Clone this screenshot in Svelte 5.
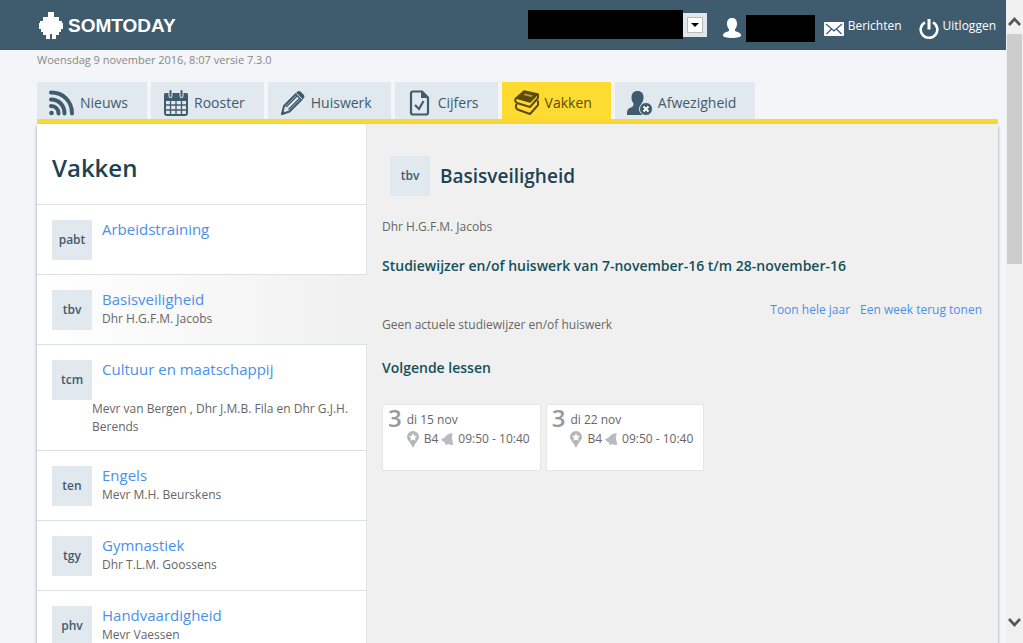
<script lang="ts">
  const tabs = ["Nieuws", "Rooster", "Huiswerk", "Cijfers", "Vakken", "Afwezigheid"];
  let activeTab = "Vakken";

  const subjects = [
    { code: "pabt", name: "Arbeidstraining", teacher: "" },
    { code: "tbv", name: "Basisveiligheid", teacher: "Dhr H.G.F.M. Jacobs" },
    {
      code: "tcm",
      name: "Cultuur en maatschappij",
      teacher: "Mevr van Bergen , Dhr J.M.B. Fila en Dhr G.J.H. Berends",
      wide: true
    },
    { code: "ten", name: "Engels", teacher: "Mevr M.H. Beurskens" },
    { code: "tgy", name: "Gymnastiek", teacher: "Dhr T.L.M. Goossens" },
    { code: "phv", name: "Handvaardigheid", teacher: "Mevr Vaessen" }
  ];
  let selected = "tbv";

  const lessons = [
    { hour: 3, day: "di 15 nov", room: "B4", time: "09:50 - 10:40" },
    { hour: 3, day: "di 22 nov", room: "B4", time: "09:50 - 10:40" }
  ];
</script>

<div class="window">
  <div class="page">
    <header>
      <a href="#home" class="logo">
        <svg width="24" height="28" viewBox="0 0 24 28" fill="#fff" aria-hidden="true">
          <path d="M9 0h6v5h5v4h3v2h1v6h-2v3h-2v3h-3v4h-4v-5h-2v5H7v-4H4v-3H2v-3H0v-6h1V9h3V5h5z" />
        </svg>
        <span>SOMTODAY</span>
      </a>

      <div class="school">
        <select aria-label="School"><option></option></select>
        <span class="select-arrow"></span>
        <span class="select-mask"></span>
      </div>

      <div class="user">
        <svg width="18" height="20" viewBox="0 0 18 20" fill="#fff" aria-hidden="true">
          <path d="M9 0c3 0 5 2 5 5.500c0 3-1 4.500-2 6v1.500c2 1 6 1.300 6 4.500c0 1.500-4 2.500-9 2.500s-9-1-9-2.500c0-3.200 4-3.500 6-4.500v-1.500c-1-1.500-2-3-2-6C4 2 6 0 9 0z" />
        </svg>
        <span class="user-name"></span>
      </div>

      <a href="#berichten" class="header-link">
        <svg width="20" height="14" viewBox="0 0 20 14" aria-hidden="true">
          <rect width="20" height="14" rx="1" fill="#fff" />
          <path d="M2 2l8 7l8-7M2.500 12l5-5M17.500 12l-5-5" fill="none" stroke="#3f5c6e" stroke-width="1.300" />
        </svg>
        <span>Berichten</span>
      </a>
      <a href="#uitloggen" class="header-link logout">
        <svg width="20" height="20" viewBox="0 0 20 20" fill="none" stroke="#fff" aria-hidden="true">
          <path d="M6 3.300a8.300 8.300 0 1 0 8 0" stroke-width="2.600" />
          <path d="M10 0v10.500" stroke-width="3" />
        </svg>
        <span>Uitloggen</span>
      </a>
    </header>

    <p class="version">Woensdag 9 november 2016, 8:07 versie 7.3.0</p>

    <nav>
      {#each tabs as tab}
        <a href="#{tab.toLowerCase()}" class="tab" class:active={tab === activeTab} on:click={() => (activeTab = tab)}>
          <svg width="26" height="26" viewBox="0 0 26 26" aria-hidden="true">
            {#if tab === "Nieuws"}
              <g fill="none" stroke="currentColor" stroke-width="4" stroke-linecap="round">
                <path d="M2 2.500C14 2.500 23 11 23 23.500M2 9.500c8 0 13.500 6 13.500 14M2 16c4.500 0 7.500 3 7.500 7.500" />
              </g>
              <circle cx="2.500" cy="23" r="2.300" fill="currentColor" />
            {:else if tab === "Rooster"}
              <path d="M3 3h20q2 0 2 2v6H1V5q0-2 2-2z" fill="currentColor" />
              <rect x="2" y="4" width="22" height="21" rx="2" fill="none" stroke="currentColor" stroke-width="2" />
              <path d="M2 15h22M2 20h22M7.500 10v15M13 10v15M18.500 10v15" stroke="currentColor" stroke-width="1.300" />
              <path d="M7.500 1v5M18.500 1v5" stroke="#e1e8ee" stroke-width="4" stroke-linecap="round" />
              <path d="M7.500 1v5M18.500 1v5" stroke="currentColor" stroke-width="2" stroke-linecap="round" />
            {:else if tab === "Huiswerk"}
              <path d="M2 24l2-8L16 4l5.500 5.500L9.500 21.500z" fill="none" stroke="currentColor" stroke-width="2" stroke-linejoin="round" />
              <path d="M6 17L17 6M8.500 19.500L19.500 8.500" stroke="currentColor" stroke-width="1.500" />
              <path d="M1 25l1.500-5l3.500 3.500zM16 3l1.500-1.500q1.500-1 3 0l3.500 3.500q1 1.500 0 3L22.500 9.500z" fill="currentColor" />
              <path d="M16.500 3.500l5.500 5.500" stroke="#e1e8ee" stroke-width="1" />
            {:else if tab === "Cijfers"}
              <path d="M15 1.500H6q-2 0-2 2v19q0 2 2 2h13q2 0 2-2V7.500z" fill="none" stroke="currentColor" stroke-width="2.200" stroke-linejoin="round" />
              <path d="M14 1l7 7h-7z" fill="currentColor" />
              <path d="M8 15l4 4L16.500 11" fill="none" stroke="currentColor" stroke-width="2.200" />
            {:else if tab === "Vakken"}
              <path d="M10 1l14 3l-8 8L2 8z" fill="currentColor" stroke="currentColor" stroke-width="1.500" stroke-linejoin="round" />
              <path d="M11 3.500l8 2l-1.500 1.500l-8-2z" fill="#fedb31" fill-opacity="0.600" />
              <path d="M2 8q-2 3 1 5l13 4l8-9V4M2.500 14q-1.500 4 1 5.500l12.500 4.500l8-9V10.500" fill="none" stroke="currentColor" stroke-width="2" stroke-linejoin="round" />
            {:else}
              <path d="M10.500 1c4 0 6 2.500 6 6.500c0 3-1 4.500-2 6v2.500q-2 5 1.500 9H0c0-5 .5-6 4-7.500c2-1 2.500-1.500 2.500-4c-1.500-2-2-3.500-2-6C4.500 3.500 6.500 1 10.500 1z" fill="currentColor" />
              <circle cx="19" cy="19" r="6.500" fill="currentColor" stroke="#e1e8ee" />
              <path d="M16.500 16.500l5 5M21.500 16.500l-5 5" stroke="#fff" stroke-width="2" />
            {/if}
          </svg>
          <span>{tab}</span>
        </a>
      {/each}
    </nav>

    <main>
      <aside>
        <h1>Vakken</h1>
        <ul>
          {#each subjects as subject}
            <li class:selected={subject.code === selected} class:wide={subject.wide}>
              <span class="badge">{subject.code}</span>
              <a href="#{subject.code}" on:click={() => (selected = subject.code)}>{subject.name}</a>
              <span class="teacher">{subject.teacher}</span>
            </li>
          {/each}
        </ul>
      </aside>

      <section class="detail">
        <div class="detail-title">
          <span class="badge">tbv</span>
          <h2>Basisveiligheid</h2>
        </div>
        <p>Dhr H.G.F.M. Jacobs</p>
        <h3>Studiewijzer en/of huiswerk van 7-november-16 t/m 28-november-16</h3>
        <div class="period-links">
          <a href="#jaar">Toon hele jaar</a>
          <a href="#week">Een week terug tonen</a>
        </div>
        <p>Geen actuele studiewijzer en/of huiswerk</p>
        <h3 class="next">Volgende lessen</h3>
        <div class="lessons">
          {#each lessons as lesson}
            <div class="lesson">
              <span class="hour">{lesson.hour}</span>
              <div class="lesson-info">
                <span>{lesson.day}</span>
                <div class="lesson-place">
                  <svg width="12" height="17" viewBox="0 0 12 17" aria-hidden="true">
                    <path d="M6 0a6 6 0 0 1 6 6c0 3-4 6-6 11C4 12 0 9 0 6a6 6 0 0 1 6-6z" fill="#b4b6b6" />
                    <path d="M6 2l1.200 2.700l2.800.3l-2 2l.6 2.800L6 8.400L3.400 9.800L4 7L2 5l2.800-.3z" fill="#fff" />
                  </svg>
                  <span class="room">{lesson.room}</span>
                  <svg width="13" height="13" viewBox="0 0 13 13" aria-hidden="true">
                    <path d="M0 6q4-1 6-4q3-2.500 6-1.500q-1.500 2-1 5q.5 3 1.500 6q-3 1-5-.5l-3 1l-.5-2.500q-3-.5-4-3.500z" fill="#b9bcbb" />
                  </svg>
                  <span class="time">{lesson.time}</span>
                </div>
              </div>
            </div>
          {/each}
        </div>
      </section>
    </main>
  </div>

  <div class="scrollbar" aria-hidden="true">
    <svg width="17" height="34" viewBox="0 0 17 34">
      <path d="M3 25l5.500-6l5.500 6" fill="none" stroke="#555" stroke-width="2.600" />
    </svg>
    <div class="track"><div class="thumb"></div></div>
    <svg width="17" height="34" viewBox="0 0 17 34">
      <path d="M3 10l5.500 6l5.500-6" fill="none" stroke="#555" stroke-width="2.600" />
    </svg>
  </div>
</div>

<style>
  :global(body) {
    background-color: #f3f5f8;
  }

  .window {
    display: flex;
    height: 100vh;
    overflow: hidden;

    font-family: "Open Sans", sans-serif;
    font-size: 12px;
    line-height: 18px;
    color: #666;
  }

  .page {
    flex: 1;
    min-width: 0;
  }

  a {
    color: #4a90e8;
    text-decoration: none;
  }

  h1,
  h2,
  h3,
  p,
  ul {
    margin: 0;
    padding: 0;
  }

  svg {
    flex: none;
  }

  header {
    display: flex;
    align-items: center;
    height: 50px;
    padding: 0 10px 0 39px;

    background-color: #3f5c6e;
  }

  .logo {
    display: flex;
    align-items: center;
    gap: 5px;
    margin-right: auto;
    padding-top: 2px;

    font-family: "Liberation Sans", sans-serif;
    font-size: 19px;
    font-weight: bold;
    color: #fff;
  }

  .school {
    position: relative;
    display: flex;
    width: 179px;
    margin-right: 16px;
  }

  .school select {
    width: 100%;
    height: 24px;
    appearance: none;
    background-color: #e1e6ee;
    border: 0;
  }

  .select-arrow {
    position: absolute;
    top: 4px;
    right: 4px;
    display: flex;
    align-items: center;
    justify-content: center;
    width: 14px;
    height: 14px;

    background-color: #fff;
    border: 1px solid #bbb;
    pointer-events: none;
  }

  .select-arrow::after {
    content: "";
    border: 4px solid transparent;
    border-top-color: #000;
    border-bottom: 0;
  }

  .select-mask {
    position: absolute;
    top: -3px;
    left: 0;
    width: 155px;
    height: 29px;
    background-color: #000;
  }

  .user {
    display: flex;
    align-items: center;
    gap: 5px;
    margin-right: 9px;
    padding-top: 6px;
  }

  .user-name {
    width: 69px;
    height: 27px;
    background-color: #000;
  }

  .header-link {
    display: flex;
    align-items: center;
    gap: 4px;
    padding-top: 2px;
    color: #fff;
  }

  .header-link svg {
    margin-top: 6px;
  }

  .logout {
    margin-left: 17px;
  }

  .version {
    padding: 1px 37px 0;
    font-size: 11px;
    color: #888;
  }

  nav {
    display: flex;
    gap: 4px;
    margin: 13px 8px 0 37px;
    border-bottom: 5px solid #f9d835;
  }

  .tab {
    display: flex;
    align-items: center;
    gap: 5px;
    height: 33px;
    padding: 4px 19px 0 12px;

    font-size: 14px;
    color: #3f5c6e;
    background-color: #e1e8ee;
  }

  .tab.active {
    color: #5c4b0c;
    background-color: #fedb31;
  }

  main {
    display: flex;
    min-height: 640px;
    margin: 0 8px 0 37px;

    background-color: #f0f0f0;
    box-shadow: 0 2px 3px rgba(0, 0, 0, 0.4);
  }

  aside {
    box-sizing: border-box;
    flex: none;
    width: 330px;
    background-color: #fff;
    border-right: 1px solid #e2e5e8;
  }

  h1 {
    padding: 28px 15px 20px;
    border-bottom: 1px solid #dce1e5;

    font-size: 24px;
    font-weight: 600;
    line-height: 32px;
    color: #1b4353;
  }

  ul {
    list-style: none;
  }

  li {
    display: grid;
    grid-template-columns: 40px 1fr;
    grid-template-rows: 20px 20px;
    column-gap: 10px;
    padding: 15px 15px 14px;
    border-bottom: 1px solid #dce1e5;
  }

  li a {
    font-size: 15px;
    line-height: 18px;
  }

  li .badge {
    grid-row: 1 / 3;
  }

  li.selected {
    margin-right: -1px;
    background: linear-gradient(to right, #fff, #f0f0f0);
  }

  li.wide .teacher {
    grid-column: 1 / 3;
    grid-row: 3;
    padding-left: 40px;
  }

  .badge {
    display: flex;
    align-items: center;
    justify-content: center;
    width: 40px;
    height: 40px;

    font-weight: 600;
    color: #3f5c6e;
    background-color: #e1e8ee;
  }

  .detail {
    flex: 1;
    min-width: 0;
    padding: 32px 16px 32px 15px;
  }

  .detail-title {
    display: flex;
    align-items: center;
    gap: 10px;
    margin: 0 0 22px 8px;
  }

  h2 {
    font-size: 19px;
    font-weight: 600;
    color: #1b4353;
  }

  h3 {
    margin-top: 20px;
    font-size: 14px;
    font-weight: 600;
    line-height: 20px;
    color: #14505a;
  }

  h3.next {
    margin-top: 24px;
  }

  .period-links {
    display: flex;
    justify-content: flex-end;
    gap: 10px;
    margin-top: 25px;
  }

  .period-links + p {
    margin-top: -3px;
  }

  .lessons {
    display: flex;
    flex-wrap: wrap;
    gap: 5px;
    margin-top: 26px;
  }

  .lesson {
    display: flex;
    gap: 5px;
    height: 59px;
    padding: 5px 10px 1px 5px;

    background-color: #fff;
    border: 1px solid #e6e6e6;
    border-radius: 2px;
  }

  .hour {
    font-size: 24px;
    font-weight: 600;
    line-height: 16px;
    color: #999;
  }

  .lesson-info {
    padding-top: 1px;
  }

  .lesson-place {
    display: flex;
    align-items: center;
    margin-top: 1px;
  }

  .room {
    padding: 0 3px 0 5px;
  }

  .time {
    padding-left: 4px;
  }

  .scrollbar {
    display: flex;
    flex-direction: column;
    width: 17px;
    background-color: #f0f0f0;
  }

  .track {
    flex: 1;
    padding: 0 1px;
  }

  .thumb {
    height: 40%;
    background-color: #cdcdcd;
  }
</style>
